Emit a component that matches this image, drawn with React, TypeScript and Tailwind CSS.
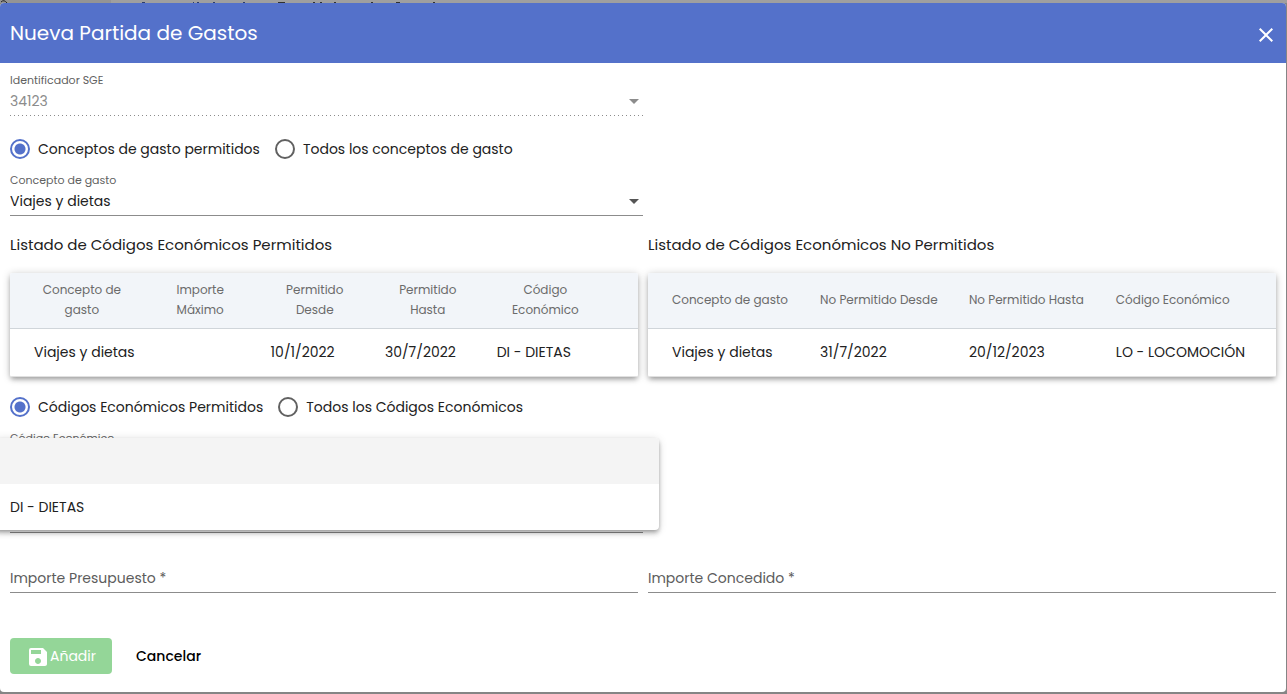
import { useState } from "react";
import type { ReactNode } from "react";
import { MdClose, MdSave } from "react-icons/md";

function Arrow({ className }: { className: string }) {
  return (
    <svg viewBox="0 0 10 5" className={`pointer-events-none absolute right-1 bottom-3 h-[5px] w-[10px] ${className}`} aria-hidden="true">
      <path d="M0 0h10L5 5z" fill="currentColor" />
    </svg>
  );
}

function SelectField({ id, label, value, disabled = false }: { id: string; label: string; value: string; disabled?: boolean }) {
  return (
    <div className="w-1/2">
      <label htmlFor={id} className="block text-[11px] leading-4 text-[#616161]">
        {label}
      </label>
      <div className="relative">
        <select
          id={id}
          disabled={disabled}
          className={
            disabled
              ? "block h-7 w-full appearance-none bg-transparent pb-[2px] text-[14px] leading-5 text-[#8c8c8c] opacity-100"
              : "block h-7 w-full appearance-none border-b border-[#8c8c8c] bg-transparent pb-px text-[14px] leading-5 text-[#212121]"
          }
        >
          <option>{value}</option>
        </select>
        {disabled && (
          <div className="absolute inset-x-0 bottom-0 h-px bg-[linear-gradient(to_right,#8c8c8c_0,#8c8c8c_33%,transparent_33%)] bg-[length:4px_1px]" />
        )}
        <Arrow className={disabled ? "text-[#8c8c8c]" : "text-[#555555]"} />
      </div>
    </div>
  );
}

function RadioGroup({ name, options }: { name: string; options: string[] }) {
  const [selected, setSelected] = useState(0);
  return (
    <div role="radiogroup" className="flex h-5 items-center gap-[15px]">
      {options.map((option, i) => (
        <label key={option} className="flex items-center gap-2 text-[14px] leading-5">
          <input
            type="radio"
            name={name}
            checked={selected === i}
            onChange={() => setSelected(i)}
            className="m-0 size-5 shrink-0 appearance-none rounded-full border-2 border-[#616161] checked:border-[#5471ca] checked:bg-[radial-gradient(circle,#5471ca_5px,transparent_6px)]"
          />
          {option}
        </label>
      ))}
    </div>
  );
}

type TableProps = { title: string; columns: string[]; widths: string[]; row: string[]; centered?: boolean };

function CodesTable({ title, columns, widths, row, centered = false }: TableProps) {
  return (
    <section>
      <h2 className="text-[15px] leading-5">{title}</h2>
      <div className="mt-[18px] overflow-hidden rounded-xs bg-white shadow-[0_3px_5px_-1px_rgba(0,0,0,0.3),0_1px_8px_rgba(0,0,0,0.2)]">
        <table className="w-full table-fixed border-collapse">
          <colgroup>
            {widths.map((w, i) => (
              <col key={i} className={w} />
            ))}
          </colgroup>
          <thead>
            <tr className="h-[55px] border-b border-[#d0d5da] bg-[#f2f5f9]">
              {columns.map((c) => (
                <th
                  key={c}
                  scope="col"
                  className={
                    centered
                      ? "pr-[26px] text-center text-[12px] leading-5 font-normal whitespace-pre-line text-[#6b6b6b] first:pl-6 last:pr-11"
                      : "text-left text-[12px] leading-5 font-normal whitespace-nowrap text-[#6b6b6b] first:pl-6"
                  }
                >
                  {c}
                </th>
              ))}
            </tr>
          </thead>
          <tbody>
            <tr className="h-12 border-b border-[#e0e0e0]">
              {row.map((cell, i) => (
                <td key={i} className="text-[14px] leading-5 whitespace-nowrap first:pl-6">
                  {cell}
                </td>
              ))}
            </tr>
          </tbody>
        </table>
      </div>
    </section>
  );
}

function AmountField({ id, children }: { id: string; children: ReactNode }) {
  return (
    <div className="relative">
      <label htmlFor={id} className="pointer-events-none absolute top-0 left-0 text-[14px] leading-5 text-[#5c5c5c]">
        {children}
      </label>
      <input id={id} type="text" required className="block h-[25px] w-full border-b border-[#8c8c8c] bg-transparent outline-none" />
    </div>
  );
}

function PageBehind() {
  return (
    <div className="h-[3px] overflow-hidden bg-[#9f9f9f]">
      <svg width="460" height="3" viewBox="0 0 460 3" aria-hidden="true">
        <path d="M0 0h111v3H0z" fill="#949494" />
        <path d="M1 2q3-3 6 1" fill="none" stroke="#222222" strokeWidth="1" />
        <path d="M142 2.5h3M193 2.5h1M197 2.5h2M213 2.5h2M243 2.5h2" stroke="#2c3c6b" strokeWidth="1" />
        <path d="M278 2.5h7M313 2.5h2M320 2.5h2M334 2.5h2M371 2.5h2M396 2.5h4M433 2.5h2" stroke="#303030" strokeWidth="1" />
      </svg>
    </div>
  );
}

export default function App() {
  return (
    <div className="flex min-h-screen flex-col bg-[#858585] pr-px pb-[2px] font-['Poppins','Inter',sans-serif] text-[#212121]">
      <div className="-mr-px">
        <PageBehind />
      </div>
      <main role="dialog" aria-labelledby="dialog-title" className="flex-1 overflow-hidden rounded-sm bg-white">
        <header className="flex h-15 items-center justify-between bg-[#5471ca] pr-2 pl-[10px] text-white">
          <h1 id="dialog-title" className="text-[20px] leading-8">
            Nueva Partida de Gastos
          </h1>
          <button type="button" aria-label="Cerrar" className="pt-1">
            <MdClose className="size-6" />
          </button>
        </header>

        <form className="px-[10px] pt-[9px] pb-4" onSubmit={(e) => e.preventDefault()}>
          <SelectField id="identificador" label="Identificador SGE" value="34123" disabled />
          <div className="mt-[23px]">
            <RadioGroup name="conceptos" options={["Conceptos de gasto permitidos", "Todos los conceptos de gasto"]} />
          </div>
          <div className="mt-[13px]">
            <SelectField id="concepto" label="Concepto de gasto" value="Viajes y dietas" />
          </div>

          <div className="mt-[19px] grid grid-cols-2 gap-[10px]">
            <CodesTable
              title="Listado de Códigos Económicos Permitidos"
              centered
              columns={["Concepto de\ngasto", "Importe\nMáximo", "Permitido\nDesde", "Permitido\nHasta", "Código\nEconómico"]}
              widths={["w-[23.2%]", "w-[18.3%]", "w-[18.2%]", "w-[17.8%]", "w-[22.5%]"]}
              row={["Viajes y dietas", "", "10/1/2022", "30/7/2022", "DI - DIETAS"]}
            />
            <CodesTable
              title="Listado de Códigos Económicos No Permitidos"
              columns={["Concepto de gasto", "No Permitido Desde", "No Permitido Hasta", "Código Económico"]}
              widths={["w-[27.4%]", "w-[23.7%]", "w-[23.4%]", "w-[25.5%]"]}
              row={["Viajes y dietas", "31/7/2022", "20/12/2023", "LO - LOCOMOCIÓN"]}
            />
          </div>

          <div className="mt-5">
            <RadioGroup name="codigos" options={["Códigos Económicos Permitidos", "Todos los Códigos Económicos"]} />
          </div>

          <div className="relative mt-[13px] w-1/2">
            <label htmlFor="codigo" className="block text-[11px] leading-4 text-[#616161]">
              Código Económico
            </label>
            <button
              id="codigo"
              type="button"
              aria-haspopup="listbox"
              aria-expanded="true"
              className="block h-[87px] w-full border-b border-[#8c8c8c]"
            />
            <ul
              role="listbox"
              aria-label="Código Económico"
              className="absolute top-2 -right-4 -left-4 overflow-hidden rounded-sm bg-white text-[14px] shadow-[0_2px_4px_-1px_rgba(0,0,0,0.3),0_4px_5px_rgba(0,0,0,0.14),0_1px_10px_rgba(0,0,0,0.12)]"
            >
              <li role="option" aria-selected="true" className="h-[46px] bg-[#f4f4f4]" />
              <li role="option" aria-selected="false" className="flex h-[46px] items-center px-4 pt-[2px]">
                DI - DIETAS
              </li>
            </ul>
          </div>

          <div className="mt-[35px] grid grid-cols-2 gap-[10px]">
            <AmountField id="presupuesto">Importe Presupuesto *</AmountField>
            <AmountField id="concedido">Importe Concedido *</AmountField>
          </div>

          <div className="mt-[45px] flex items-center gap-6">
            <button type="submit" disabled className="flex h-9 items-center rounded-sm bg-[#94d698] px-4 pt-[2px] text-[14px] text-white">
              <MdSave className="size-6" />
              Añadir
            </button>
            <button type="button" className="pt-[2px] text-[14px] font-medium text-black">
              Cancelar
            </button>
          </div>
        </form>
      </main>
    </div>
  );
}
